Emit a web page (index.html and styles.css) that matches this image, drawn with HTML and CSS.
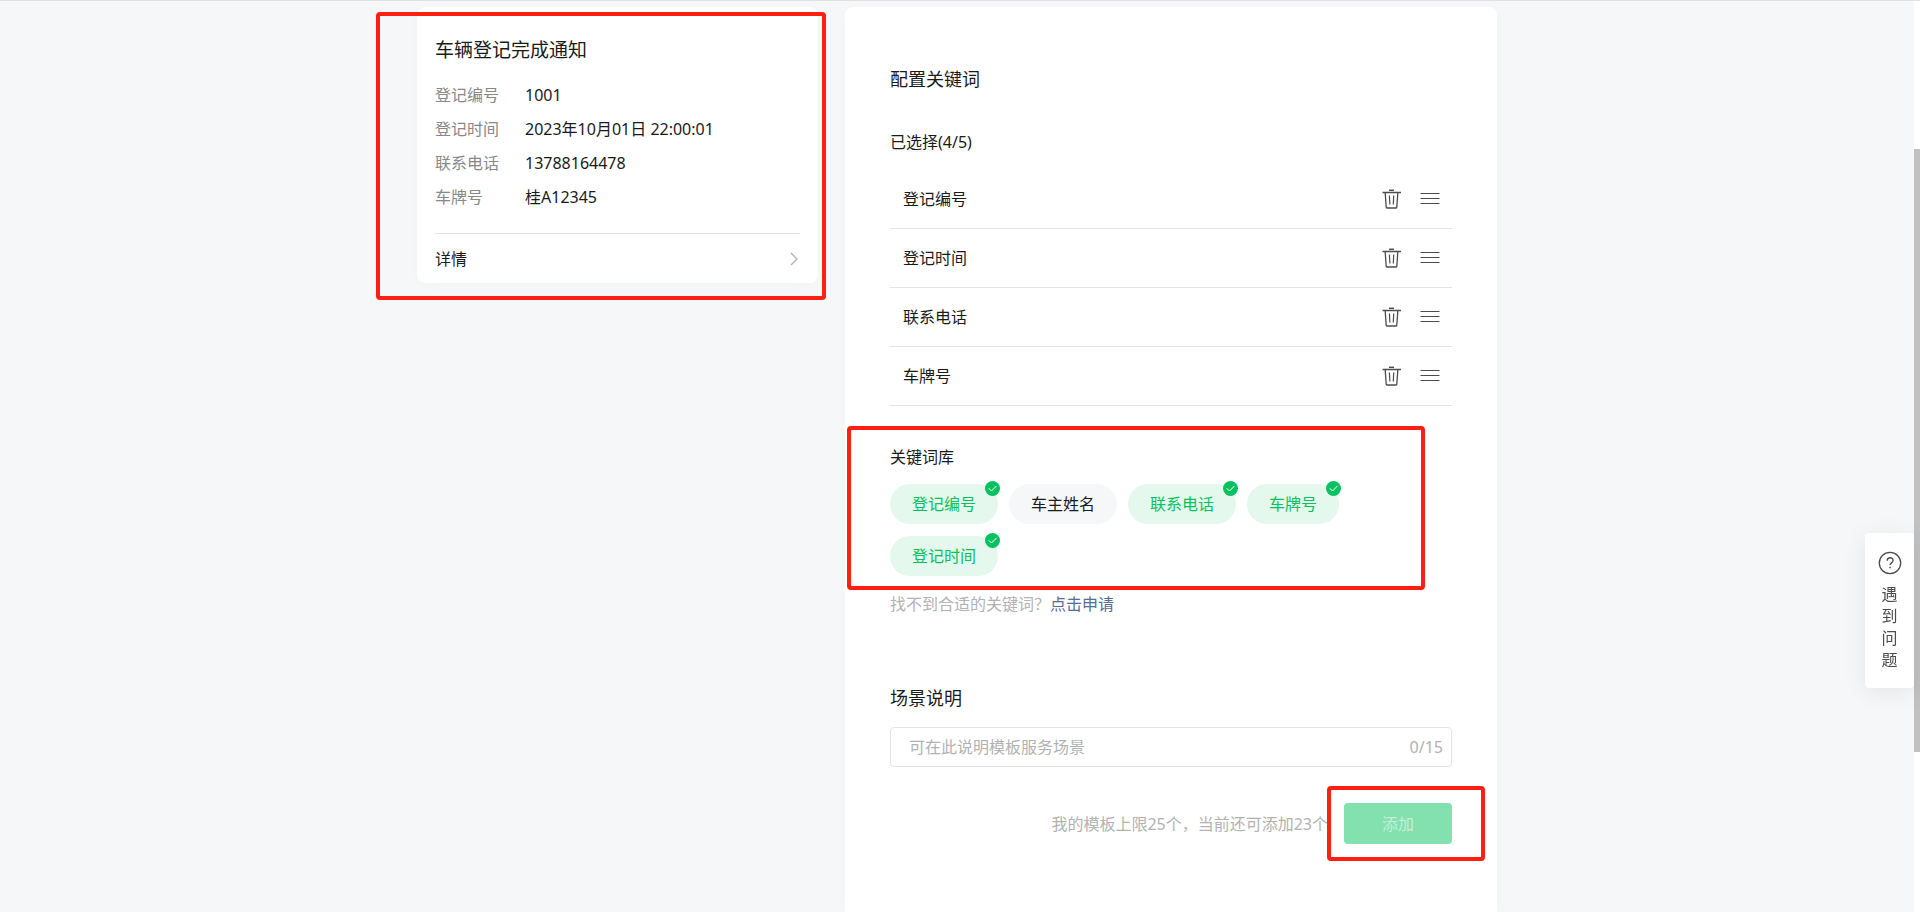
FILE: index.html
```html
<!DOCTYPE html>
<html lang="zh-CN">
<head>
<meta charset="utf-8">
<title>配置关键词</title>
<link rel="stylesheet" href="styles.css">
</head>
<body>
<svg class="sprite" aria-hidden="true">
  <symbol id="trash" viewBox="0 0 20 20"><g fill="none" stroke="#4c4c4c"><path d="M0.5 3.5h18.500" stroke-width="1.500"/><path d="M7 1.300h5" stroke-width="1.500"/><path d="M3.200 4l1 14.300q0 .7.7.7h9.200q.7 0 .7-.7l1-14.300" stroke-width="1.300"/><path d="M7.400 6.500l.5 9M11.700 6.500l-.4 9" stroke-width="1.200"/></g></symbol>
  <symbol id="lines" viewBox="0 0 20 20"><path d="M.5 4.500h19M.5 9.500h19M.5 14.500h19" stroke="#4c4c4c" stroke-width="1.200"/></symbol>
  <symbol id="tick" viewBox="0 0 15 15"><circle cx="7.500" cy="7.500" r="7.500" fill="#07c160"/><path d="M3.800 7.300l2.700 2.700 4.900-5" fill="none" stroke="#fff" stroke-width="1"/></symbol>
</svg>
<div class="page">
  <main class="main">
    <div class="content">
      <section class="preview">
        <div class="card">
          <h2 class="card-title">车辆登记完成通知</h2>
          <dl class="fields">
            <dt>登记编号</dt><dd>1001</dd>
            <dt>登记时间</dt><dd>2023年10月01日 22:00:01</dd>
            <dt>联系电话</dt><dd>13788164478</dd>
            <dt>车牌号</dt><dd>桂A12345</dd>
          </dl>
          <a class="detail" href="#">详情<svg width="8" height="14" viewBox="0 0 8 14"><path d="M1 1l6 6-6 6" fill="none" stroke="#b2b2b2" stroke-width="1.300"/></svg></a>
        </div>
        <div class="mark mark-card"></div>
      </section>
      <section class="panel">
        <h2 class="heading">配置关键词</h2>
        <p class="label">已选择(4/5)</p>
        <ul class="selected">
          <li>登记编号<span class="tools"><button type="button" aria-label="删除"><svg><use href="#trash"/></svg></button><button type="button" aria-label="排序"><svg><use href="#lines"/></svg></button></span></li>
          <li>登记时间<span class="tools"><button type="button" aria-label="删除"><svg><use href="#trash"/></svg></button><button type="button" aria-label="排序"><svg><use href="#lines"/></svg></button></span></li>
          <li>联系电话<span class="tools"><button type="button" aria-label="删除"><svg><use href="#trash"/></svg></button><button type="button" aria-label="排序"><svg><use href="#lines"/></svg></button></span></li>
          <li>车牌号<span class="tools"><button type="button" aria-label="删除"><svg><use href="#trash"/></svg></button><button type="button" aria-label="排序"><svg><use href="#lines"/></svg></button></span></li>
        </ul>
        <div class="library">
          <p class="label">关键词库</p>
          <div class="chips">
            <button type="button" class="chip on" aria-pressed="true">登记编号<svg class="badge"><use href="#tick"/></svg></button>
            <button type="button" class="chip" aria-pressed="false">车主姓名</button>
            <button type="button" class="chip on" aria-pressed="true">联系电话<svg class="badge"><use href="#tick"/></svg></button>
            <button type="button" class="chip on" aria-pressed="true">车牌号<svg class="badge"><use href="#tick"/></svg></button>
            <button type="button" class="chip on" aria-pressed="true">登记时间<svg class="badge"><use href="#tick"/></svg></button>
          </div>
          <div class="mark mark-library"></div>
        </div>
        <p class="apply">找不到合适的关键词？<a href="#">点击申请</a></p>
        <label class="heading" for="scene">场景说明</label>
        <div class="field">
          <input id="scene" type="text" maxlength="15" placeholder="可在此说明模板服务场景">
          <span>0/15</span>
        </div>
        <div class="actions">
          <span>我的模板上限25个，当前还可添加23个</span>
          <div class="submit">
            <button type="button" disabled>添加</button>
            <div class="mark mark-submit"></div>
          </div>
        </div>
      </section>
    </div>
  </main>
  <div class="rail"><div class="thumb"></div></div>
</div>
<a class="help" href="#">
  <svg width="24" height="24" viewBox="0 0 24 24" fill="none" stroke="#4c4c4c"><circle cx="12" cy="12" r="10.700" stroke-width="1.300"/><path d="M9.200 9.800q0-3 2.900-3t2.900 2.700q0 1.400-1.400 2.400t-1.500 2.100" stroke-width="1.400"/><path d="M12.100 15.800v1.500" stroke-width="1.500"/></svg>
  <span>遇</span><span>到</span><span>问</span><span>题</span>
</a>
</body>
</html>
```
FILE: styles.css
```css
* { box-sizing: border-box; }
body {
  margin: 0;
  height: 100vh;
  overflow: hidden;
  background: #f5f7f9;
  color: #1a1a1a;
  font: 400 16px/24px "Noto Sans", "Noto Sans CJK SC", sans-serif;
}
h2, p, ul, dl, dd { margin: 0; padding: 0; }
button, input { font: inherit; color: inherit; border: 0; padding: 0; background: none; }
a { text-decoration: none; color: inherit; }
.sprite { position: absolute; width: 0; height: 0; }
.page { display: flex; height: 100%; border-top: 1px solid #e1e1de; }
.main { flex: 1; overflow: hidden; padding-top: 6px; }
.content {
  display: grid;
  grid-template-columns: 401fr 652fr;
  column-gap: 27px;
  max-width: 1080px;
  min-height: 100%;
  margin: 0 auto;
}
.preview { position: relative; align-self: start; }
.card {
  padding: 29px 18px 0;
  background: #fff;
  border-radius: 8px;
  box-shadow: 0 2px 12px rgba(0, 0, 0, .02);
}
.card-title { font-size: 19px; line-height: 28px; font-weight: inherit; }
.fields {
  display: grid;
  grid-template-columns: 90px 1fr;
  margin-top: 14px;
  padding-bottom: 19px;
  line-height: 34px;
  border-bottom: 1px solid #e2e2e2;
}
.fields dt { color: #888; }
.detail {
  display: flex;
  align-items: center;
  justify-content: space-between;
  height: 49px;
  padding-right: 2px;
}
.panel {
  padding: 60px 45px 51px;
  background: #fff;
  border-radius: 8px 8px 0 0;
  box-shadow: 0 2px 12px rgba(0, 0, 0, .02);
}
.heading { display: block; font-size: 18px; line-height: 24px; font-weight: inherit; }
.panel .heading + .label { margin-top: 39px; }
.selected { margin-top: 16px; list-style: none; }
.selected li {
  display: flex;
  align-items: center;
  justify-content: space-between;
  height: 59px;
  padding: 0 12px 0 13px;
  border-bottom: 1px solid #e4e4e4;
}
.tools { display: flex; gap: 18px; }
.tools button, .tools svg { display: block; width: 20px; height: 20px; }
.library { position: relative; margin-top: 39px; }
.chips { display: flex; flex-wrap: wrap; gap: 12px 11px; margin-top: 15px; }
.chip {
  position: relative;
  height: 40px;
  padding: 0 22px;
  border-radius: 20px;
  background: #f5f7f9;
}
.chip.on { background: #e4f8ed; color: #07c160; }
.badge { position: absolute; top: -3px; right: -2px; width: 15px; height: 15px; }
.apply { margin: 16px 0 70px; color: #b2b2b2; }
.apply a { color: #576b95; }
.field {
  display: flex;
  align-items: center;
  height: 40px;
  margin-top: 17px;
  padding: 0 8px 0 18px;
  border: 1px solid #e4e4e4;
  border-radius: 4px;
  color: #b2b2b2;
}
.field input { flex: 1; min-width: 0; outline: 0; }
.field input::placeholder { color: #b2b2b2; opacity: 1; }
.actions {
  display: flex;
  align-items: center;
  justify-content: flex-end;
  gap: 16px;
  margin-top: 36px;
  color: #b2b2b2;
}
.submit { position: relative; }
.submit button {
  display: block;
  width: 108px;
  height: 41px;
  border-radius: 4px;
  background: #83e0af;
  color: #c1f0d7;
}
.mark {
  position: absolute;
  border: 4px solid #ff1f12;
  border-radius: 4px;
  pointer-events: none;
}
.mark-card { top: 5px; right: -8px; bottom: -17px; left: -41px; }
.mark-library { top: -19px; right: 27px; bottom: -14px; left: -43px; }
.mark-submit { top: -17px; right: -33px; bottom: -17px; left: -17px; }
.rail { display: flex; flex-direction: column; width: 6px; padding: 148px 0 160px; background: #fff; }
.thumb { flex: 1; background: #c1c1c1; }
.help {
  position: fixed;
  top: 533px;
  right: 6px;
  display: flex;
  flex-direction: column;
  align-items: center;
  width: 49px;
  padding: 18px 0 17px;
  border-radius: 4px;
  background: #fff;
  box-shadow: 0 4px 24px rgba(0, 0, 0, .08);
  color: #4c4c4c;
  line-height: 22px;
}
.help svg { margin-bottom: 8px; }
```
